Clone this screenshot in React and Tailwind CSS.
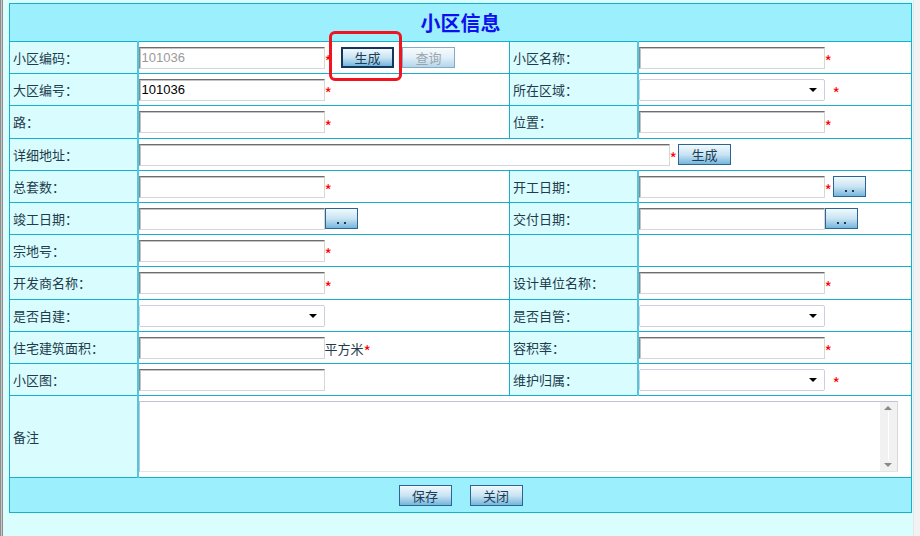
import React from 'react';

const font = { fontFamily: '"Noto Sans CJK SC", "Noto Sans", sans-serif' };

const Star = ({ gap }) => (
    <span className={`text-[#ff0000] text-[16px] leading-none mt-[7px] ${gap ? 'ml-[8px]' : ''}`}>*</span>
);

const Input = ({ value, muted, wide }) => (
    <input
        readOnly
        defaultValue={value}
        className={`${wide ? 'w-[531px]' : 'w-[186px]'} h-[22px] bg-white border border-t-[#6e6e6e] border-l-[#8a8a8a] border-r-[#d6d6d6] border-b-[#d6d6d6] shadow-[inset_1px_1px_0_#c4c4c4] px-[2px] text-[13px] outline-none ${muted ? 'text-[#9a9a9a]' : 'text-black'}`}
        style={{ fontFamily: '"Liberation Sans", Arial, sans-serif' }}
    />
);

const Select = () => (
    <div className="w-[186px] h-[22px] bg-white border border-[#cfcfdc] rounded-[2px] flex items-center justify-end pr-[7px]">
        <span className="w-0 h-0 border-l-[4px] border-r-[4px] border-t-[4px] border-l-transparent border-r-transparent border-t-black"></span>
    </div>
);

const Btn = ({ children, pressed, disabled, small }) => (
    <button
        className={`${small ? 'w-[33px]' : 'w-[53px]'} h-[21px] bg-gradient-to-b from-[#f2f9fd] via-[#c9e4f3] to-[#74b6dc] text-[13px] leading-none flex items-center justify-center ${pressed ? 'border-2 border-[#14365a]' : 'border border-[#2c6593]'} ${disabled ? 'opacity-55 text-[#4a5a68]' : 'text-[#1b3d57]'}`}
        style={font}
    >
        {children}
    </button>
);

const Dots = () => (
    <span className="flex gap-[5px] mt-[8px]">
        <span className="w-[2px] h-[2px] bg-[#1b3d57]"></span>
        <span className="w-[2px] h-[2px] bg-[#1b3d57]"></span>
    </span>
);

const Label = ({ children }) => (
    <td className="bg-[#d9fcfe] border border-[#17b0cc] border-r-2 border-r-[#52c6dc] pl-[3px] text-[13px] text-[#1e3c4c]">
        {children}
    </td>
);

const Cell = ({ children, colSpan }) => (
    <td colSpan={colSpan} className="bg-white border border-[#17b0cc]">
        <div className="flex items-center">{children}</div>
    </td>
);

export default function App() {
    return (
        <div className="relative w-[920px] h-[536px] flex overflow-hidden" style={font}>
            <div className="w-[3px] h-full border-l border-r border-[#8c8c8c] bg-[#c8c8c8]"></div>
            <div className="flex-1 bg-[#dafdfe] pl-[6px] pt-[3px]">
                <table className="w-[902px] table-fixed border-collapse border border-[#17b0cc]">
                    <colgroup>
                        <col className="w-[128px]" />
                        <col className="w-[372px]" />
                        <col className="w-[128px]" />
                        <col className="w-[274px]" />
                    </colgroup>
                    <tbody>
                        <tr className="h-[38px]">
                            <td colSpan={4} className="bg-[#9cf0fd] border border-[#17b0cc] text-center text-[20px] font-bold text-[#1010ee]">
                                小区信息
                            </td>
                        </tr>
                        <tr className="h-[32px]">
                            <Label>小区编码：</Label>
                            <Cell>
                                <Input value="101036" muted />
                                <Star />
                                <span className="ml-[9px]"><Btn pressed>生成</Btn></span>
                                <span className="ml-[8px]"><Btn disabled>查询</Btn></span>
                            </Cell>
                            <Label>小区名称：</Label>
                            <Cell><Input /><Star /></Cell>
                        </tr>
                        <tr className="h-[32px]">
                            <Label>大区编号：</Label>
                            <Cell><Input value="101036" /><Star /></Cell>
                            <Label>所在区域：</Label>
                            <Cell><Select /><Star gap /></Cell>
                        </tr>
                        <tr className="h-[33px]">
                            <Label>路：</Label>
                            <Cell><Input /><Star /></Cell>
                            <Label>位置：</Label>
                            <Cell><Input /><Star /></Cell>
                        </tr>
                        <tr className="h-[32px]">
                            <Label>详细地址：</Label>
                            <Cell colSpan={3}>
                                <Input wide />
                                <Star />
                                <span className="ml-[1px]"><Btn>生成</Btn></span>
                            </Cell>
                        </tr>
                        <tr className="h-[32px]">
                            <Label>总套数：</Label>
                            <Cell><Input /><Star /></Cell>
                            <Label>开工日期：</Label>
                            <Cell><Input /><Star /><span className="ml-[1px]"><Btn small><Dots /></Btn></span></Cell>
                        </tr>
                        <tr className="h-[32px]">
                            <Label>竣工日期：</Label>
                            <Cell><Input /><Btn small><Dots /></Btn></Cell>
                            <Label>交付日期：</Label>
                            <Cell><Input /><Btn small><Dots /></Btn></Cell>
                        </tr>
                        <tr className="h-[32px]">
                            <Label>宗地号：</Label>
                            <Cell><Input /><Star /></Cell>
                            <Label></Label>
                            <Cell></Cell>
                        </tr>
                        <tr className="h-[33px]">
                            <Label>开发商名称：</Label>
                            <Cell><Input /><Star /></Cell>
                            <Label>设计单位名称：</Label>
                            <Cell><Input /><Star /></Cell>
                        </tr>
                        <tr className="h-[32px]">
                            <Label>是否自建：</Label>
                            <Cell><Select /></Cell>
                            <Label>是否自管：</Label>
                            <Cell><Select /></Cell>
                        </tr>
                        <tr className="h-[32px]">
                            <Label>住宅建筑面积：</Label>
                            <Cell>
                                <Input />
                                <span className="text-[13px] text-[#1e3c4c] mt-[2px]">平方米</span>
                                <Star />
                            </Cell>
                            <Label>容积率：</Label>
                            <Cell><Input /><Star /></Cell>
                        </tr>
                        <tr className="h-[32px]">
                            <Label>小区图：</Label>
                            <Cell><Input /></Cell>
                            <Label>维护归属：</Label>
                            <Cell><Select /><Star gap /></Cell>
                        </tr>
                        <tr className="h-[82px]">
                            <Label>备注</Label>
                            <td colSpan={3} className="bg-white border border-[#17b0cc]">
                                <div className="w-[759px] h-[71px] border border-[#c2c2d2] border-b-[#e4e4e4] border-r-[#d8d8d8] flex justify-end">
                                    <div className="w-[17px] h-full bg-[#f1f1f1] flex flex-col items-center justify-between py-[4px]">
                                        <span className="w-0 h-0 border-l-[4px] border-r-[4px] border-b-[4px] border-l-transparent border-r-transparent border-b-[#8a8a8a]"></span>
                                        <span className="w-[1px] flex-1 bg-white my-[2px]"></span>
                                        <span className="w-0 h-0 border-l-[4px] border-r-[4px] border-t-[4px] border-l-transparent border-r-transparent border-t-[#8a8a8a]"></span>
                                    </div>
                                </div>
                            </td>
                        </tr>
                        <tr className="h-[35px]">
                            <td colSpan={4} className="bg-[#9cf0fd] border border-[#17b0cc]">
                                <div className="flex justify-center gap-[18px]">
                                    <Btn>保存</Btn>
                                    <Btn>关闭</Btn>
                                </div>
                            </td>
                        </tr>
                    </tbody>
                </table>
            </div>
            <div className="w-[7px] h-full bg-[#f2f2f2] border-l border-[#e6e6e6]"></div>
            <div className="absolute left-[329px] top-[31px] w-[73px] h-[50px] border-[3px] border-[#f0141e] rounded-[6px]"></div>
        </div>
    );
}
